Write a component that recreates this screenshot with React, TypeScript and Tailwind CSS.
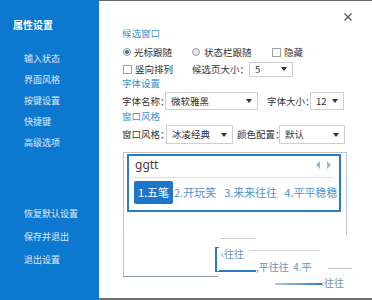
const font = { fontFamily: '"Noto Sans CJK SC", "Noto Sans", sans-serif' };

function Caret() {
  return (
    <svg width="6" height="4" viewBox="0 0 6 4" className="shrink-0">
      <path d="M0 0h6L3 4z" fill="#333" />
    </svg>
  );
}

function Select({ value, w, h = 16 }: { value: string; w: number; h?: number }) {
  return (
    <div
      className="flex items-center justify-between border border-[#cfcfcf] bg-white pl-[5px] pr-[5px] text-[#333] shrink-0"
      style={{ width: w, height: h }}
    >
      <span>{value}</span>
      <Caret />
    </div>
  );
}

function Radio({ checked }: { checked?: boolean }) {
  return (
    <span className="w-[8px] h-[8px] rounded-full border border-[#9a9a9a] bg-[#e9e9e9] flex items-center justify-center shrink-0">
      {checked && <span className="w-[4px] h-[4px] rounded-full bg-[#3f6f9c]" />}
    </span>
  );
}

function Check() {
  return <span className="w-[9px] h-[9px] border border-[#a0a0a0] bg-white shrink-0" />;
}

const sideTop = ['输入状态', '界面风格', '按键设置', '快捷键', '高级选项'];
const sideBottom = ['恢复默认设置', '保存并退出', '退出设置'];

export default function App() {
  return (
    <div className="w-[372px] h-[300px] flex bg-white overflow-hidden" style={font}>
      <aside className="w-[99px] shrink-0 bg-[#0d78d0] text-white flex flex-col pt-[18px]">
        <div className="h-[14px] pl-[13px] text-[10px] font-bold leading-[14px]">属性设置</div>
        <div className="mt-[16px] flex flex-col">
          {sideTop.map((s) => (
            <div key={s} className="h-[21px] pl-[24px] text-[9px] leading-[21px] text-white/85">
              {s}
            </div>
          ))}
        </div>
        <div className="mt-[49px] flex flex-col">
          {sideBottom.map((s) => (
            <div key={s} className="h-[23px] pl-[24px] text-[9px] leading-[23px] text-white/85">
              {s}
            </div>
          ))}
        </div>
      </aside>

      <main className="flex-1 border-t border-b-2 border-t-[#6a6a6a] border-b-[#707070] flex flex-col text-[9.5px] text-[#333]">
        <div className="h-[25px] flex justify-end pr-[19px]">
          <svg width="10" height="10" viewBox="0 0 10 10" className="mt-[11px]">
            <path d="M1.5 1.5l7 7M8.5 1.5l-7 7" stroke="#4e5a66" strokeWidth="1.3" />
          </svg>
        </div>

        <div className="pl-[23px] flex flex-col">
          <div className="h-[14px] leading-[14px] text-[#3b8fd3]">候选窗口</div>
          <div className="h-[14px] mt-[5px] flex items-center">
            <div className="w-[70px] flex items-center gap-[3px] pl-px">
              <Radio checked />
              <span>光标跟随</span>
            </div>
            <div className="w-[80px] flex items-center gap-[4px]">
              <Radio />
              <span>状态栏跟随</span>
            </div>
            <div className="flex items-center gap-[3px]">
              <Check />
              <span>隐藏</span>
            </div>
          </div>
          <div className="h-[16px] mt-[2px] flex items-center">
            <div className="w-[70px] flex items-center gap-[3px] pl-px">
              <Check />
              <span>竖向排列</span>
            </div>
            <span className="w-[57px]">候选页大小：</span>
            <Select value="5" w={44} h={15} />
          </div>
          <div className="h-[12px] leading-[12px] text-[#3b8fd3]">字体设置</div>
          <div className="h-[18px] mt-[3px] flex items-center">
            <span className="w-[43px] whitespace-nowrap">字体名称：</span>
            <Select value="微软雅黑" w={93} h={18} />
            <span className="w-[43px] ml-[9px] whitespace-nowrap">字体大小：</span>
            <Select value="12" w={34} h={18} />
          </div>
          <div className="h-[12px] leading-[12px] text-[#3b8fd3]">窗口风格</div>
          <div className="h-[19px] mt-[3px] flex items-center">
            <span className="w-[44px] whitespace-nowrap">窗口风格：</span>
            <Select value="冰凌经典" w={67} h={19} />
            <span className="w-[42px] ml-[4px] whitespace-nowrap">颜色配置：</span>
            <Select value="默认" w={66} h={19} />
          </div>

          <div className="relative mt-[8px] ml-px w-[224px] h-[125px] border-l border-t border-[#b9c6d2]">
            <div className="ml-[3px] mt-px w-[214px] h-[58px] border-2 border-[#2c7cc3] flex flex-col">
              <div className="h-[22px] mx-[6px] border-b border-[#dadfe4] flex items-center justify-between pb-[3px]">
                <span className="text-[12px] text-[#444]" style={{ fontFamily: '"Noto Sans", sans-serif' }}>ggtt</span>
                <svg width="16" height="8" viewBox="0 0 16 8" className="mr-[1px]">
                  <path d="M4 0v8L0 4z" fill="#8db9e0" />
                  <path d="M11 0v8l4-4z" fill="#8db9e0" />
                </svg>
              </div>
              <div className="flex items-center mt-[3px] ml-[5px] h-[23px] text-[11px] text-[#4c94d2] whitespace-nowrap">
                <span className="h-[23px] w-[39px] rounded-[2px] bg-[#1d76c8] text-white flex items-center justify-center">1.五笔</span>
                <span className="ml-[1px]">2.开玩笑</span>
                <span className="ml-[8px]">3.来来往往</span>
                <span className="ml-[7px]">4.平平稳稳</span>
              </div>
            </div>

            {/* broken redraw fragments in the preview */}
            <div className="absolute right-0 top-0 w-px h-[82px] bg-[#b9c6d2]" />
            <div className="absolute -left-px bottom-0 w-[95px] h-px bg-[#8c9aa8]" />
            <div className="absolute left-[96px] top-[85px] w-[36px] h-px bg-[#d0d0d0]" />
            <div className="absolute left-[91px] top-[94px] w-[4px] h-[25px] border-l-2 border-t border-b border-[#2d7ac0]" />
            <div className="absolute left-[95px] top-[117px] w-[37px] h-[2px] bg-[#2d7ac0]" />
            <div className="absolute left-[97px] top-[95px] text-[10px] leading-[12px] text-[#6d90b0] whitespace-nowrap">‹往往</div>
            <div className="absolute left-[126px] top-[97px] w-[70px] h-px bg-[#d4d4d4]" />
            <div className="absolute left-[132px] top-[108px] text-[10px] leading-[12px] text-[#6d90b0] whitespace-nowrap">,平往往&nbsp;&nbsp;4.平</div>
            <div className="absolute left-[204px] top-[115px] w-[24px] h-px bg-[#c8c8c8]" />
            <div className="absolute left-[151px] top-[130px] w-[47px] h-[2px] bg-gradient-to-r from-[#a9c8e6] to-[#2d7ac0]" />
            <div className="absolute left-[197px] top-[124px] text-[10px] leading-[12px] text-[#6d90b0] whitespace-nowrap">‹往往</div>
          </div>
        </div>
      </main>
    </div>
  );
}
